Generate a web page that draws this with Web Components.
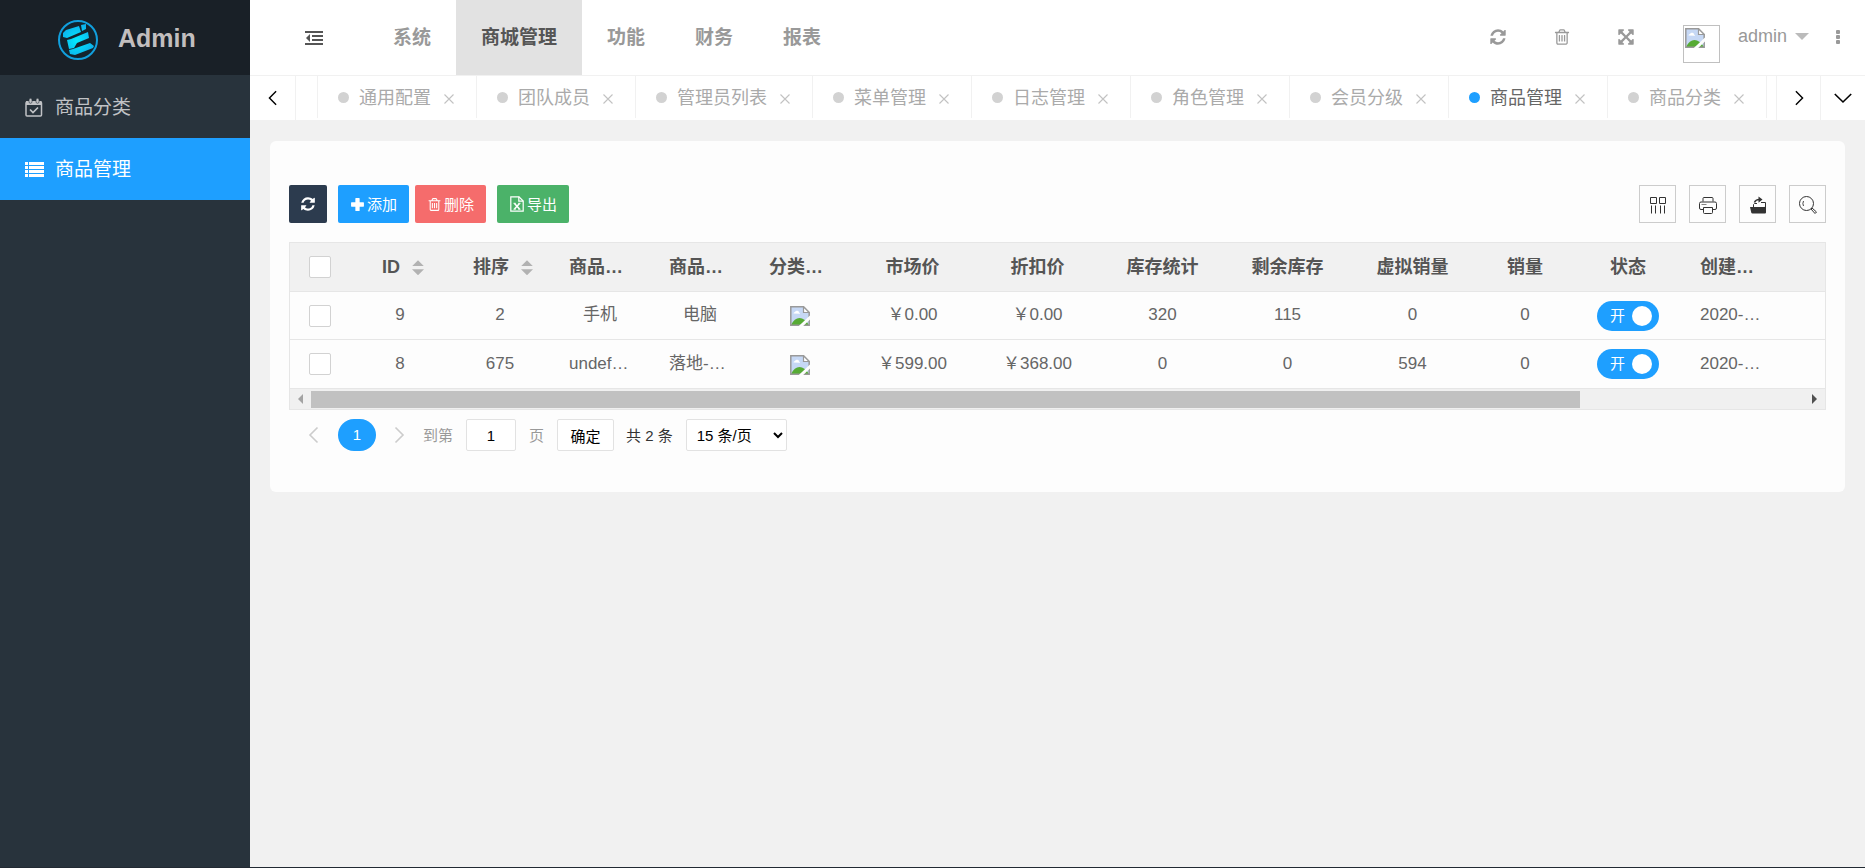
<!DOCTYPE html>
<html lang="zh-CN">
<head>
<meta charset="utf-8">
<title>Admin</title>
<style>
  body {
    margin: 0;
    font-family: "Liberation Sans", "Noto Sans CJK SC", sans-serif;
    font-size: 17px;
    color: #666;
    background: #f1f1f1;
    --accent: #1e9fff;
    --line: #e6e6e6;
  }
</style>
</head>
<body>
<admin-shell>
  <side-item slot="side" icon="calendar">商品分类</side-item>
  <side-item slot="side" icon="list" active>商品管理</side-item>

  <nav-item slot="nav">系统</nav-item>
  <nav-item slot="nav" active>商城管理</nav-item>
  <nav-item slot="nav">功能</nav-item>
  <nav-item slot="nav">财务</nav-item>
  <nav-item slot="nav">报表</nav-item>

  <user-tools slot="tools"></user-tools>

  <page-tab slot="tabs">通用配置</page-tab>
  <page-tab slot="tabs">团队成员</page-tab>
  <page-tab slot="tabs">管理员列表</page-tab>
  <page-tab slot="tabs">菜单管理</page-tab>
  <page-tab slot="tabs">日志管理</page-tab>
  <page-tab slot="tabs">角色管理</page-tab>
  <page-tab slot="tabs">会员分级</page-tab>
  <page-tab slot="tabs" active>商品管理</page-tab>
  <page-tab slot="tabs">商品分类</page-tab>

  <content-card>
    <tool-bar>
      <tool-button icon="refresh" tone="dark" label="刷新"></tool-button>
      <button-pair>
        <tool-button icon="plus" tone="blue">添加</tool-button>
        <tool-button icon="trash" tone="red">删除</tool-button>
      </button-pair>
      <tool-button icon="excel" tone="green">导出</tool-button>
      <square-button slot="end" icon="columns" label="筛选列"></square-button>
      <square-button slot="end" icon="printer" label="打印"></square-button>
      <square-button slot="end" icon="export" label="导出"></square-button>
      <square-button slot="end" icon="search" label="搜索"></square-button>
    </tool-bar>
    <goods-table></goods-table>
    <page-bar></page-bar>
  </content-card>
</admin-shell>

<script>
const ICONS = {
  refresh: ['0 0 1792 1792', '<path fill="currentColor" d="M1639 1056q0 5-1 7-64 268-268 434.500t-478 166.500q-146 0-282.500-55t-243.500-157l-129 129q-19 19-45 19t-45-19-19-45v-448q0-26 19-45t45-19h448q26 0 45 19t19 45-19 45l-137 137q71 66 161 102t187 36q134 0 250-65t186-179q11-17 53-117 8-23 30-23h192q13 0 22.500 9.500t9.500 22.500zm25-800v448q0 26-19 45t-45 19h-448q-26 0-45-19t-19-45 19-45l138-138q-148-137-349-137-134 0-250 65t-186 179q-11 17-53 117-8 23-30 23h-199q-13 0-22.500-9.500t-9.500-22.500v-7q65-268 270-434.500t480-166.500q146 0 284 55.500t245 156.500l130-129q19-19 45-19t45 19 19 45z"/>'],
  trash: ['0 0 1792 1792', '<path fill="currentColor" d="M704 736v576q0 14-9 23t-23 9h-64q-14 0-23-9t-9-23v-576q0-14 9-23t23-9h64q14 0 23 9t9 23zm256 0v576q0 14-9 23t-23 9h-64q-14 0-23-9t-9-23v-576q0-14 9-23t23-9h64q14 0 23 9t9 23zm256 0v576q0 14-9 23t-23 9h-64q-14 0-23-9t-9-23v-576q0-14 9-23t23-9h64q14 0 23 9t9 23zm128 724v-948h-896v948q0 22 7 40.500t14.500 27 10.500 8.500h832q3 0 10.500-8.500t14.500-27 7-40.500zm-672-1076h448l-48-117q-7-9-17-11h-317q-10 2-17 11zm928 32v64q0 14-9 23t-23 9h-96v948q0 83-47 143.500t-113 60.500h-832q-66 0-113-58.500t-47-141.500v-952h-96q-14 0-23-9t-9-23v-64q0-14 9-23t23-9h309l70-167q15-37 54-63t79-26h320q40 0 79 26t54 63l70 167h309q14 0 23 9t9 23z"/>'],
  expand: ['0 0 1792 1792', '<path fill="currentColor" d="M1411 541l-355 355 355 355 144-144q29-31 70-14 39 17 39 59v448q0 26-19 45t-45 19h-448q-42 0-59-40-17-39 14-69l144-144-355-355-355 355 144 144q31 30 14 69-17 40-59 40h-448q-26 0-45-19t-19-45v-448q0-42 40-59 39-17 69 14l144 144 355-355-355-355-144 144q-19 19-45 19-12 0-24-5-40-17-40-59v-448q0-26 19-45t45-19h448q42 0 59 40 17 39-14 69l-144 144 355 355 355-355-144-144q-31-30-14-69 17-40 59-40h448q26 0 45 19t19 45v448q0 42-39 59-13 5-25 5-26 0-45-19z"/>'],
  outdent: ['0 0 18 18', '<g fill="currentColor"><rect x="0" y="2" width="18" height="2"/><rect x="7" y="6" width="11" height="2"/><rect x="7" y="10" width="11" height="2"/><rect x="0" y="14" width="18" height="2"/><path d="M5 5v8L1 9z"/></g>'],
  dots: ['0 0 18 18', '<g fill="currentColor"><rect x="7" y="2" width="4" height="4" rx="1"/><rect x="7" y="7" width="4" height="4" rx="1"/><rect x="7" y="12" width="4" height="4" rx="1"/></g>'],
  calendar: ['0 0 19 19', '<g fill="none" stroke="currentColor" stroke-width="1.500"><rect x="1" y="4" width="15.500" height="14" rx="1"/><path stroke-width="1.700" d="M5 11.500l3 3 5-5"/></g><path fill="currentColor" d="M1 3h15.500v4H1z"/><rect x="4" y=".3" width="3" height="5" rx="1.500" fill="currentColor" stroke="#28333c" stroke-width=".6"/><rect x="11" y=".3" width="3" height="5" rx="1.500" fill="currentColor" stroke="#28333c" stroke-width=".6"/>'],
  list: ['0 0 19 19', '<path fill="currentColor" d="M0 2h3v3H0zM4 2h15v3H4zM0 6h3v3H0zM4 6h15v3H4zM0 10h3v3H0zM4 10h15v3H4zM0 14h3v3H0zM4 14h15v3H4z"/>'],
  plus: ['0 0 14 14', '<path fill="currentColor" d="M5.500 1h3q.5 0 .5.500V5h3.500q.5 0 .5.500v3q0 .5-.5.500H9v3.500q0 .5-.5.500h-3q-.5 0-.5-.5V9H1.500Q1 9 1 8.500v-3Q1 5 1.500 5H5V1.500Q5 1 5.500 1z"/>'],
  excel: ['0 0 14 16', '<g fill="none" stroke="currentColor" stroke-width="1.200"><path d="M.8.800h8.200l4.200 4.200v10.200H.8z"/><path d="M8.800.800v4.400h4.400"/><path stroke-width="1.600" d="M4.500 7.500l5 5.500M9.500 7.500l-5 5.500"/><path stroke-width="1" d="M3.500 7.300h2.200M8.300 7.300h2.200M3.500 13.200h2.200M8.300 13.200h2.200"/></g>'],
  columns: ['0 0 18 18', '<g fill="none" stroke="currentColor" stroke-width="1"><path d="M1.500 1.500h6v6h-6zM10.500 1.500h6v6h-6z"/><path d="M2.500 9.500v8M6.500 9.500v8M11.500 9.500v8M15.500 9.500v8"/></g>'],
  printer: ['0 0 18 18', '<g fill="none" stroke="currentColor" stroke-width="1"><path d="M4 5.500V2.500q0-1 1-1h8q1 0 1 1v3"/><path d="M4 13.500H2q-1.500 0-1.500-1.500V7.500Q.5 6 2 6h14q1.500 0 1.500 1.500V12q0 1.500-1.500 1.500h-2"/><path d="M4.500 11.500h9v5q0 1-1 1h-7q-1 0-1-1z"/><path d="M2.500 8.500h5" stroke-opacity=".6"/></g>'],
  export: ['0 0 18 18', '<path fill="currentColor" d="M1 11h14.500l1.500-1v6.500q0 1-1 1H3.500q-1 0-1.200-.8z"/><path fill="none" stroke="currentColor" d="M4.500 11V8.500l1-1H8M12 6.500h4.500V12"/><path fill="none" stroke="currentColor" stroke-width="1.600" d="M5.500 6.500q1-3 5-3"/><path fill="currentColor" d="M9.500.500l4 3-4 3.200z"/>'],
  search: ['0 0 18 18', '<g fill="none" stroke="currentColor"><circle cx="7.500" cy="7.500" r="7"/><path stroke-width=".9" d="M4.500 5Q3.200 7.500 4.500 10"/><path d="M12 13l1-1 4.500 4-1.500 1.500z"/></g>'],
  left: ['0 0 18 18', '<path fill="none" stroke="currentColor" stroke-width="1.600" d="M12.500 1.500L5 9l7.500 7.500"/>'],
  right: ['0 0 18 18', '<path fill="none" stroke="currentColor" stroke-width="1.600" d="M5.500 1.500L13 9l-7.500 7.500"/>'],
  down: ['0 0 18 18', '<path fill="none" stroke="currentColor" stroke-width="1.600" d="M.8 5L9 13l8.200-8"/>'],
  close: ['0 0 10 10', '<path fill="none" stroke="currentColor" stroke-width="1.100" d="M.5.500l9 9M9.500.500l-9 9"/>'],
  broken: ['0 0 20 20', '<path fill="#c6d8f5" d="M1 1h12.500L19 6.500V19H1z"/><path fill="#fff" d="M3.500 7.500q0-1.500 1.500-1.500.8-1.800 2.500-1.200Q9 5 9 6.500q1.200.2 1 1.300z"/><path fill="#57ab35" d="M1 19q3.500-7 8.500-7T19 19z"/><path fill="none" stroke="#999" stroke-width="1.500" d="M.8.800h12.700l5.700 5.700V19.200H.8z"/><path fill="#fff" stroke="#999" stroke-width="1.200" d="M13.500.800v5.700h5.700z"/><path fill="#fdfdfd" d="M20 9.500v4L13.200 20H8.800z"/>']
};

/* Registers a custom element whose shadow root is cloned from one template. */
function define(name, css, html, ready) {
  const tpl = document.createElement('template');
  tpl.innerHTML = `<style>*{box-sizing:border-box}button,input,select{font-family:inherit;margin:0}a{color:inherit;text-decoration:none}${css}</style>${html}`;
  customElements.define(name, class extends HTMLElement {
    constructor() {
      super();
      this.attachShadow({ mode: 'open' }).append(tpl.content.cloneNode(true));
    }
    connectedCallback() {
      if (ready) ready(this, this.shadowRoot);
    }
  });
}

const passIcon = (host, root) => {
  root.querySelector('ui-icon').setAttribute('name', host.getAttribute('icon'));
};

customElements.define('ui-icon', class extends HTMLElement {
  static observedAttributes = ['name'];
  constructor() {
    super();
    this.attachShadow({ mode: 'open' });
  }
  connectedCallback() { this.draw(); }
  attributeChangedCallback() { this.draw(); }
  draw() {
    const icon = ICONS[this.getAttribute('name')];
    if (!icon) return;
    this.shadowRoot.innerHTML = `<style>:host{display:block;flex:none;width:18px;height:18px}svg{display:block;width:100%;height:100%}</style><svg viewBox="${icon[0]}" aria-hidden="true">${icon[1]}</svg>`;
  }
});

define('brand-logo', `
  :host { display: flex; align-items: center; gap: 19px; height: 75px; padding-left: 57px; background: #192027; }
  svg { width: 42px; height: 42px; margin-top: 5px; }
  strong { font-size: 25px; color: #c2bebe; padding-top: 2px; }
`, `
  <svg viewBox="0 0 42 42" aria-hidden="true">
    <defs><radialGradient id="g" gradientUnits="userSpaceOnUse" cx="20" cy="22" r="17"><stop offset="0" stop-color="#02ecff"/><stop offset="1" stop-color="#0cb2ec"/></radialGradient></defs>
    <circle cx="21" cy="21" r="19" fill="#13242e" stroke="#119fdd" stroke-width="2"/>
    <g fill="url(#g)">
      <path d="M6 14l3-3 13-4 2 6-14 6-4-1z"/>
      <path d="M24 6l5-1v5l-4 2z"/>
      <path d="M10 21l4-1 17-7 1 6-12 5-3 5-5 1z"/>
      <path d="M12 31l4-1 17-6 4 3-1 2-18 7-5-1z"/>
    </g>
  </svg>
  <strong>Admin</strong>`);

define('side-item', `
  :host { display: block; color: #c0c2c5; font-size: 19px; }
  :host([active]) { background: var(--accent); color: #fff; }
  a { display: flex; align-items: center; height: 62px; padding-left: 25px; gap: 11px; }
  ui-icon { width: 19px; height: 19px; }
  span { padding-bottom: 4px; }
`, `<a href="#"><ui-icon></ui-icon><span><slot></slot></span></a>`, passIcon);

define('nav-item', `
  :host { display: block; color: #999; font-size: 19px; font-weight: bold; }
  :host([active]) { background: #e2e2e2; color: #555; }
  a { display: flex; align-items: center; height: 75px; padding: 0 25px 4px; }
`, `<a href="#"><slot></slot></a>`);

define('page-tab', `
  :host { display: flex; align-items: center; flex: none; height: 42px; padding: 0 22px 0 20px; border-right: 1px solid #f1f1f1; font-size: 18px; color: #aaa; --dot: #d2d2d2; }
  :host([active]) { color: #666; --dot: var(--accent); }
  a { display: flex; align-items: center; gap: 10px; }
  i { width: 11px; height: 11px; border-radius: 50%; background: var(--dot); }
  span { padding-bottom: 2px; }
  button { border: 0; padding: 3px 0 0; margin-left: 13px; background: none; color: #c2c2c2; }
  ui-icon { width: 10px; height: 10px; }
`, `<a href="#"><i></i><span><slot></slot></span></a><button type="button" aria-label="关闭"><ui-icon name="close"></ui-icon></button>`);

define('user-tools', `
  :host { display: flex; align-items: center; height: 75px; padding-right: 18px; color: #999; }
  button { display: block; border: 0; padding: 0; background: none; color: inherit; }
  .tools { display: flex; gap: 46px; }
  .tools, .more { padding-bottom: 2px; }
  .avatar { width: 37px; height: 38px; margin: 13px 18px 0 48px; padding: 2px 1px; border: 1px solid #c0c0c0; }
  .avatar ui-icon { width: 20px; height: 20px; }
  .user { display: flex; align-items: center; gap: 8px; padding-bottom: 2px; font-size: 18px; }
  .user::after { content: ""; border: 7px solid transparent; border-top-color: #bbb; border-bottom-width: 0; }
  .more { margin-left: 20px; }
`, `
  <div class="tools">
    <button type="button" aria-label="刷新"><ui-icon name="refresh"></ui-icon></button>
    <button type="button" aria-label="清理"><ui-icon name="trash"></ui-icon></button>
    <button type="button" aria-label="全屏"><ui-icon name="expand"></ui-icon></button>
  </div>
  <div class="avatar"><ui-icon name="broken"></ui-icon></div>
  <a class="user" href="#">admin</a>
  <button class="more" type="button" aria-label="更多"><ui-icon name="dots"></ui-icon></button>`);

define('admin-shell', `
  :host { display: grid; grid-template-columns: 250px minmax(0, 1fr); min-height: 100vh; box-sizing: border-box; border-bottom: 1px solid #222a33; }
  aside { background: #28333c; }
  nav.side { padding-top: 1px; }
  header { display: flex; align-items: center; height: 75px; background: #fff; }
  .fold { border: 0; margin: 0 45px 0 55px; padding: 0; background: none; color: #555; }
  nav.top { display: flex; flex: 1; }
  .strip { display: flex; height: 45px; background: #fff; border-top: 1px solid #f1f1f1; }
  .strip > button { display: grid; place-items: center; flex: none; width: 45px; border: 0 solid #f1f1f1; padding: 0; background: none; color: #000; }
  .strip > .prev { width: 46px; border-right-width: 1px; }
  .strip > .next, .strip > .menu { border-left-width: 1px; }
  .strip > .next { width: 44px; }
  .prev ui-icon, .next ui-icon { width: 16px; height: 16px; }
  .tabs { display: flex; flex: 1; min-width: 0; overflow: hidden; margin-left: 21px; }
  .tabs::before { content: ""; height: 42px; border-left: 1px solid #f1f1f1; }
  main { padding: 21px 20px; }
`, `
  <aside>
    <brand-logo></brand-logo>
    <nav class="side"><slot name="side"></slot></nav>
  </aside>
  <div>
    <header>
      <button class="fold" type="button" aria-label="侧边伸缩"><ui-icon name="outdent"></ui-icon></button>
      <nav class="top"><slot name="nav"></slot></nav>
      <slot name="tools"></slot>
    </header>
    <div class="strip">
      <button class="prev" type="button" aria-label="向左"><ui-icon name="left"></ui-icon></button>
      <div class="tabs"><slot name="tabs"></slot></div>
      <button class="next" type="button" aria-label="向右"><ui-icon name="right"></ui-icon></button>
      <button class="menu" type="button" aria-label="标签菜单"><ui-icon name="down"></ui-icon></button>
    </div>
    <main><slot></slot></main>
  </div>`);

define('content-card', `
  :host { display: block; padding: 44px 19px 41px; border-radius: 6px; background: #fdfdfd; }
`, `<slot></slot>`);

define('tool-bar', `
  :host { display: flex; justify-content: space-between; margin-bottom: 19px; }
  .start { display: flex; gap: 11px; }
  .end { display: flex; gap: 13px; }
`, `<div class="start"><slot></slot></div><div class="end"><slot name="end"></slot></div>`);

define('button-pair', `:host { display: flex; gap: 6px; }`, `<slot></slot>`);

define('tool-button', `
  :host { display: block; }
  button { display: flex; align-items: center; justify-content: center; gap: 2px; height: 38px; padding: 0 12px; border: 0; border-radius: 2px; background: var(--accent); color: #fff; font-size: 15px; }
  ui-icon { width: 15px; height: 15px; }
  span { padding-bottom: 2px; }
  :host([label]) span { display: none; }
  :host([tone=dark]) button { width: 38px; padding: 0; background: #2c3b4e; }
  :host([tone=dark]) ui-icon { width: 16px; height: 16px; }
  :host([tone=red]) button { background: #f56c6c; }
  :host([tone=green]) button { background: #4bb269; }
  :host([tone=green]) ui-icon { width: 16px; height: 16px; }
`, `<button type="button"><ui-icon></ui-icon><span><slot></slot></span></button>`, (host, root) => {
  passIcon(host, root);
  if (host.hasAttribute('label')) root.querySelector('button').setAttribute('aria-label', host.getAttribute('label'));
});

define('square-button', `
  :host { display: block; }
  button { display: grid; place-items: center; width: 37px; height: 38px; padding: 2px 0 0; border: 1px solid #ccc; background: none; color: #333; }
`, `<button type="button"><ui-icon></ui-icon></button>`, (host, root) => {
  passIcon(host, root);
  root.querySelector('button').setAttribute('aria-label', host.getAttribute('label'));
});

define('toggle-switch', `
  :host { display: inline-block; vertical-align: middle; }
  label { position: relative; display: flex; align-items: center; justify-content: space-between; width: 62px; height: 30px; padding: 0 7px 0 13px; border-radius: 15px; background: var(--accent); color: #fff; font-size: 15px; }
  label::after { content: ""; width: 20px; height: 20px; border-radius: 50%; background: #fff; }
  input { position: absolute; inset: 0; width: 100%; height: 100%; opacity: 0; }
`, `<label><input type="checkbox" role="switch" checked><slot></slot></label>`);

define('sort-arrows', `
  :host { display: inline-flex; flex-direction: column; gap: 3px; margin: 0 -6px 0 12px; vertical-align: middle; }
  button { display: block; width: 12px; height: 6px; padding: 0; border: 0; background: #b2b2b2; clip-path: polygon(50% 0, 100% 100%, 0 100%); }
  .desc { clip-path: polygon(0 0, 100% 0, 50% 100%); }
`, `<button type="button" aria-label="升序"></button><button class="desc" type="button" aria-label="降序"></button>`);

define('scroll-track', `
  :host { display: flex; align-items: center; height: 20px; padding: 0 8px; background: #f0f0f0; }
  i { border: 5px solid transparent; border-left-width: 0; border-right-color: #a3a3a3; }
  i.end { border-width: 5px 0 5px 5px; border-left-color: #505050; }
  .track { flex: 1; margin: 2px 8px 1px; }
  .thumb { width: 85%; height: 17px; background: #c1c1c1; }
`, `<i></i><div class="track"><div class="thumb"></div></div><i class="end"></i>`);

define('goods-table', `
  :host { display: block; border: 1px solid var(--line); }
  table { width: 100%; table-layout: fixed; border-collapse: separate; border-spacing: 0; }
  th, td { height: 49px; padding: 0 0 1px; border-bottom: 1px solid var(--line); text-align: center; white-space: nowrap; line-height: 24px; }
  tbody tr:first-child td { height: 48px; }
  th { background: #f1f1f1; color: #555; font-size: 18px; }
  .start { text-align: left; padding-left: 19px; }
  .box { padding: 0; }
  .box input { display: block; appearance: none; width: 22px; height: 22px; margin: 0 auto; border: 1px solid #d2d2d2; border-radius: 2px; background: #fff; }
  td ui-icon { width: 20px; height: 20px; margin: 2px auto 0; }
  td.state { padding: 0; line-height: 0; }
  .c60 { width: 60px; } .c100 { width: 100px; } .c125 { width: 125px; } .c106 { width: 106px; }
`, `
  <table>
    <colgroup>
      <col class="c60"><col class="c100"><col class="c100"><col class="c100"><col class="c100"><col class="c100">
      <col class="c125"><col class="c125"><col class="c125"><col class="c125"><col class="c125">
      <col class="c100"><col class="c106"><col>
    </colgroup>
    <thead><tr>
      <th class="box"><input type="checkbox" aria-label="全选"></th>
      <th>ID<sort-arrows></sort-arrows></th><th>排序<sort-arrows></sort-arrows></th>
      <th class="start">商品…</th><th class="start">商品…</th><th class="start">分类…</th>
      <th>市场价</th><th>折扣价</th><th>库存统计</th><th>剩余库存</th><th>虚拟销量</th><th>销量</th><th>状态</th><th class="start">创建…</th>
    </tr></thead>
    <tbody>
      <tr>
        <td class="box"><input type="checkbox" aria-label="选择 9"></td>
        <td>9</td><td>2</td><td>手机</td><td>电脑</td><td><ui-icon name="broken"></ui-icon></td>
        <td>￥0.00</td><td>￥0.00</td><td>320</td><td>115</td><td>0</td><td>0</td>
        <td class="state"><toggle-switch>开</toggle-switch></td><td class="start">2020-…</td>
      </tr>
      <tr>
        <td class="box"><input type="checkbox" aria-label="选择 8"></td>
        <td>8</td><td>675</td><td class="start">undef…</td><td class="start">落地-…</td><td><ui-icon name="broken"></ui-icon></td>
        <td>￥599.00</td><td>￥368.00</td><td>0</td><td>0</td><td>594</td><td>0</td>
        <td class="state"><toggle-switch>开</toggle-switch></td><td class="start">2020-…</td>
      </tr>
    </tbody>
  </table>
  <scroll-track></scroll-track>`);

define('page-bar', `
  :host { display: flex; align-items: center; height: 32px; margin-top: 9px; padding-left: 16px; font-size: 15px; color: #999; }
  a.step { color: #ccc; }
  a.now { display: grid; place-items: center; width: 38px; height: 32px; margin: 0 14px 0 15px; padding-bottom: 2px; border-radius: 16px; background: var(--accent); color: #fff; }
  form { display: flex; align-items: center; gap: 13px; margin-left: 15px; }
  label { display: flex; align-items: center; gap: 13px; }
  span { padding-bottom: 2px; }
  input, form button, select { height: 32px; border: 1px solid #e2e2e2; border-radius: 2px; background: #fff; color: #000; font-size: 15px; }
  input { width: 50px; padding: 0; text-align: center; }
  form button { width: 57px; padding: 0; }
  select { width: 101px; padding: 0 6px; }
  .total { margin: 0 13px 0 12px; color: #333; }
`, `
  <a class="step" href="#" aria-label="上一页"><ui-icon name="left"></ui-icon></a>
  <a class="now" href="#">1</a>
  <a class="step" href="#" aria-label="下一页"><ui-icon name="right"></ui-icon></a>
  <form onsubmit="return false"><label><span>到第</span><input type="text" value="1"><span>页</span></label><button type="submit">确定</button></form>
  <span class="total">共 2 条</span>
  <select aria-label="每页条数"><option>15 条/页</option></select>`);
</script>
</body>
</html>
